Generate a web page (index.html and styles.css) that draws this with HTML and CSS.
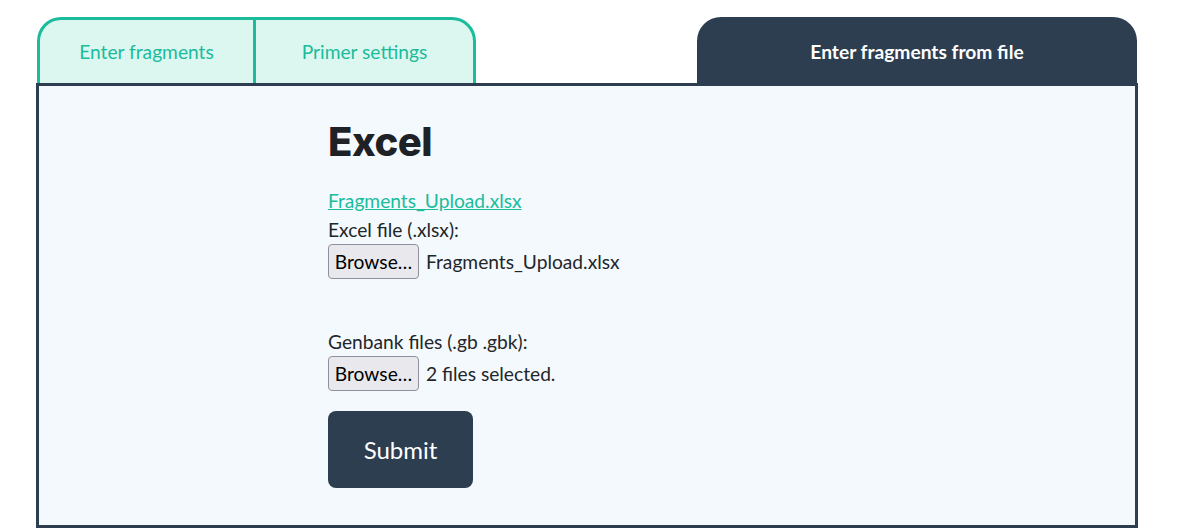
FILE: index.html
```html
<!DOCTYPE html>
<html>
<head>
<meta charset="utf-8">
<link rel="stylesheet" href="styles.css">
</head>
<body>
<div class="page">
  <div class="tabs">
    <div class="tab-group">
      <div class="tab tab-first">Enter fragments</div>
      <div class="tab">Primer settings</div>
    </div>
    <div class="tab-active">Enter fragments from file</div>
  </div>
  <div class="panel">
    <div class="content">
      <h1 class="title">Excel</h1>
      <a class="link" href="#">Fragments_Upload.xlsx</a>
      <div class="label">Excel file (.xlsx):</div>
      <div class="file-row"><span class="browse">Browse…</span><span class="file-name">Fragments_Upload.xlsx</span></div>
      <div class="label label-gap">Genbank files (.gb .gbk):</div>
      <div class="file-row"><span class="browse">Browse…</span><span class="file-name">2 files selected.</span></div>
      <button class="submit">Submit</button>
    </div>
  </div>
</div>
</body>
</html>
```
FILE: styles.css
```css
html, body {
  margin: 0;
  padding: 0;
  background: #ffffff;
}
body {
  font-family: Lato, "Liberation Sans", sans-serif;
  color: #222629;
}
.page {
  width: 1102px;
  margin-left: 36px;
  padding-top: 17px;
}
.tabs {
  display: flex;
  justify-content: space-between;
  align-items: flex-end;
  height: 66px;
}
.tab-group {
  display: flex;
  margin-left: 1px;
  height: 63px;
  border: 3px solid #1abc9c;
  border-bottom: none;
  border-radius: 24px 24px 0 0;
  background: #dcf7f0;
  overflow: hidden;
}
.tab {
  display: flex;
  align-items: center;
  justify-content: center;
  width: 217px;
  font-size: 19.2px;
  color: #1abc9c;
}
.tab-first {
  width: 213px;
  border-right: 3px solid #1abc9c;
}
.tab-active {
  display: flex;
  align-items: center;
  justify-content: center;
  width: 440px;
  height: 66px;
  margin-right: 1px;
  border-radius: 24px 24px 0 0;
  background: #2c3e50;
  color: #ffffff;
  font-size: 19.2px;
  font-weight: 700;
  padding-top: 3px;
  box-sizing: border-box;
}
.panel {
  border: 3px solid #2c3e50;
  background: #f4f9fd;
  padding: 32px 0 37px 289px;
}
.content {
  display: flex;
  flex-direction: column;
  align-items: flex-start;
}
.title {
  margin: 0 0 20px 0;
  font-family: Inter, "Liberation Sans", sans-serif;
  font-size: 40px;
  line-height: 48px;
  font-weight: 800;
  color: #1e2226;
  letter-spacing: -0.5px;
}
.link {
  font-size: 19.2px;
  line-height: 29px;
  color: #1abc9c;
  text-decoration: underline;
}
.label {
  font-size: 19.2px;
  line-height: 29px;
}
.label-gap {
  margin-top: 48px;
}
.file-row {
  display: flex;
  align-items: center;
  gap: 7px;
  font-size: 19.2px;
}
.browse {
  display: inline-flex;
  align-items: center;
  justify-content: center;
  box-sizing: border-box;
  width: 91px;
  height: 35px;
  background: #e9e9ed;
  border: 1px solid #8f8f9d;
  border-radius: 4px;
  color: #000000;
  font-size: 19.2px;
}
.file-name {
  color: #222629;
}
.submit {
  margin-top: 20px;
  width: 145px;
  height: 77px;
  border: none;
  border-radius: 8px;
  background: #2c3e50;
  color: #ffffff;
  font-family: Lato, "Liberation Sans", sans-serif;
  font-size: 24px;
}
```
